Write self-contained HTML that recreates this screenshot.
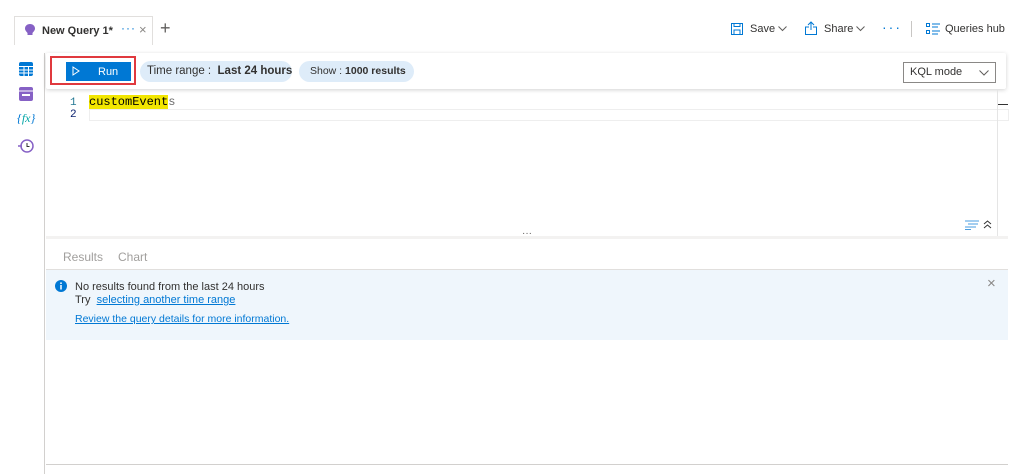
<!DOCTYPE html>
<html><head><style>
*{margin:0;padding:0;box-sizing:border-box}
body{width:1023px;height:474px;background:#fff;font-family:"Liberation Sans",sans-serif;position:relative;overflow:hidden;color:#323130}
.a{position:absolute}
.pill{position:absolute;background:#deecf9;border-radius:11px;height:21px;font-size:11.5px;line-height:21px;white-space:nowrap}
</style></head><body>
<!-- tab -->
<div class="a" style="left:14px;top:16px;width:139px;height:29px;border:1px solid #e1dfdd;border-bottom:none;background:#fff"></div>
<svg class="a" style="left:25px;top:24px" width="10" height="12" viewBox="0 0 10 12"><path d="M5 0C2 0 0 2 0 4.5c0 2 1.5 3 2.5 4.5V11h5V9C8.5 7.5 10 6.5 10 4.5 10 2 8 0 5 0z" fill="#8661c5"/></svg>
<div class="a" style="left:42px;top:25px;font-size:11px;font-weight:bold;color:#323130">New Query 1*</div>
<div class="a" style="left:121px;top:21px;font-size:12px;color:#0078d4;letter-spacing:1px">···</div>
<div class="a" style="left:139px;top:22px;font-size:13px;color:#8a8886">×</div>
<div class="a" style="left:160px;top:18px;font-size:18px;color:#605e5c;font-weight:300">+</div>
<!-- top right -->
<svg class="a" style="left:731px;top:23px" width="12" height="12" viewBox="0 0 12 12"><rect x=".5" y=".5" width="11" height="11" fill="none" stroke="#0078d4"/><rect x="3" y="7" width="6" height="4.5" fill="none" stroke="#0078d4"/><rect x="3" y=".5" width="6" height="3" fill="none" stroke="#0078d4"/></svg>
<div class="a" style="left:750px;top:23px;font-size:11px">Save</div>
<svg class="a" style="left:778px;top:26px" width="9" height="6"><path d="M.5.5 4.5 4.5 8.5.5" fill="none" stroke="#605e5c"/></svg>
<svg class="a" style="left:805px;top:21px" width="12" height="14" viewBox="0 0 12 14"><path d="M6 9V1M3 4 6 1 9 4M4 6H.5v7.5h11V6H8" fill="none" stroke="#0078d4"/></svg>
<div class="a" style="left:824px;top:23px;font-size:11px">Share</div>
<svg class="a" style="left:856px;top:26px" width="9" height="6"><path d="M.5.5 4.5 4.5 8.5.5" fill="none" stroke="#605e5c"/></svg>
<div class="a" style="left:882px;top:19px;font-size:14px;color:#0078d4;letter-spacing:2px">···</div>
<div class="a" style="left:911px;top:21px;width:1px;height:16px;background:#c8c6c4"></div>
<svg class="a" style="left:926px;top:23px" width="14" height="12" viewBox="0 0 14 12"><rect x=".5" y=".5" width="3" height="3" fill="none" stroke="#0078d4"/><rect x=".5" y="7.5" width="3" height="3" fill="none" stroke="#0078d4"/><path d="M6 1h8M6 4h6M6 8h8M6 11h6" stroke="#0078d4"/></svg>
<div class="a" style="left:945px;top:23px;font-size:11px">Queries hub</div>
<!-- left rail -->
<div class="a" style="left:44px;top:53px;width:1px;height:421px;background:#d2d0ce"></div>
<svg class="a" style="left:19px;top:62px" width="14" height="14" viewBox="0 0 14 14"><rect width="14" height="14" rx="2" fill="#0078d4"/><path d="M0 4.5h14M0 8h14M0 11h14M5 4v10M9.5 4v10" stroke="#fff"/></svg>
<svg class="a" style="left:19px;top:87px" width="14" height="14" viewBox="0 0 14 14"><rect width="14" height="14" rx="2" fill="#8661c5"/><path d="M0 4h14" stroke="#fff"/><rect x="3" y="7" width="8" height="2" fill="#fff"/></svg>
<div class="a" style="left:17px;top:111px;font-size:12px;color:#0078d4;font-style:italic;font-family:'Liberation Serif',serif">{<span style="color:#00a4a6">fx</span>}</div>
<svg class="a" style="left:18px;top:138px" width="16" height="16" viewBox="0 0 16 16"><circle cx="9" cy="8" r="6" fill="none" stroke="#8661c5" stroke-width="1.5"/><path d="M9 5v3.5h2.5" stroke="#323130" fill="none"/><path d="M0 8h4" stroke="#8661c5" stroke-width="1.5"/></svg>
<!-- toolbar -->
<div class="a" style="left:46px;top:53px;width:960px;height:36px;background:#fff;box-shadow:0 1px 4px rgba(0,0,0,.18);border-radius:2px"></div>
<div class="a" style="left:50px;top:56px;width:86px;height:29px;border:2px solid #e0393e"></div>
<div class="a" style="left:66px;top:62px;width:65px;height:19px;background:#0078d4"></div>
<svg class="a" style="left:72px;top:66px" width="8" height="10"><path d="M1 1 7 5 1 9z" fill="none" stroke="#fff"/></svg>
<div class="a" style="left:98px;top:66px;font-size:11px;color:#fff">Run</div>
<div class="pill" style="left:140px;top:61px;width:152px;padding-left:7px">Time range :&nbsp; <b>Last 24 hours</b></div>
<div class="pill" style="left:299px;top:61px;width:115px;padding-left:11px;font-size:10.5px">Show : <b>1000 results</b></div>
<div class="a" style="left:903px;top:62px;width:93px;height:21px;border:1px solid #8a8886;font-size:11px;line-height:19px;padding-left:6px">KQL mode</div>
<svg class="a" style="left:979px;top:70px" width="10" height="6"><path d="M.5.5 5 5 9.5.5" fill="none" stroke="#605e5c"/></svg>
<!-- editor -->
<div class="a" style="left:70px;top:97px;font-size:11px;color:#237893;font-family:'Liberation Mono',monospace">1</div>
<div class="a" style="left:70px;top:109px;font-size:11px;color:#0b216f;font-family:'Liberation Mono',monospace">2</div>
<div class="a" style="left:89px;top:109px;width:920px;height:12px;border:1px solid #eeeeee"></div>
<div class="a" style="left:89px;top:96px;font-size:12px;font-family:'Liberation Mono',monospace;line-height:13px"><span style="background:#f2e600;color:#000">customEvent</span><span style="color:#6d6d6d">s</span></div>
<div class="a" style="left:997px;top:90px;width:1px;height:146px;background:#e5e5e5"></div>
<div class="a" style="left:998px;top:104px;width:10px;height:1px;background:#333"></div>
<svg class="a" style="left:965px;top:220px" width="14" height="10"><path d="M0 1h14M3 4h10M0 7h11M0 9.5h6" stroke="#4a9de0"/></svg>
<svg class="a" style="left:983px;top:220px" width="9" height="9"><path d="M1 4 4.5 1 8 4M1 8 4.5 5 8 8" fill="none" stroke="#333"/></svg>
<div class="a" style="left:46px;top:236px;width:962px;height:3px;background:#f3f2f1"></div>
<div class="a" style="left:522px;top:228px;font-size:10px;color:#605e5c">···</div>
<!-- results -->
<div class="a" style="left:63px;top:250px;font-size:12px;color:#a19f9d">Results</div>
<div class="a" style="left:118px;top:250px;font-size:12px;color:#a19f9d">Chart</div>
<div class="a" style="left:46px;top:269px;width:962px;height:71px;background:#eff6fc;border-top:1px solid #e1dfdd"></div>
<svg class="a" style="left:55px;top:280px" width="12" height="12"><circle cx="6" cy="6" r="6" fill="#0078d4"/><path d="M6 5v4.5" stroke="#fff" stroke-width="1.5"/><circle cx="6" cy="3.2" r=".9" fill="#fff"/></svg>
<div class="a" style="left:75px;top:281px;font-size:11px">No results found from the last 24 hours</div>
<div class="a" style="left:75px;top:294px;font-size:11px">Try&nbsp; <span style="color:#0078d4;text-decoration:underline">selecting another time range</span></div>
<div class="a" style="left:75px;top:313px;font-size:10.5px;color:#0078d4;text-decoration:underline">Review the query details for more information.</div>
<div class="a" style="left:987px;top:275px;font-size:15px;color:#8a8886">×</div>
<div class="a" style="left:46px;top:464px;width:962px;height:1px;background:#d2d0ce"></div>
</body></html>
